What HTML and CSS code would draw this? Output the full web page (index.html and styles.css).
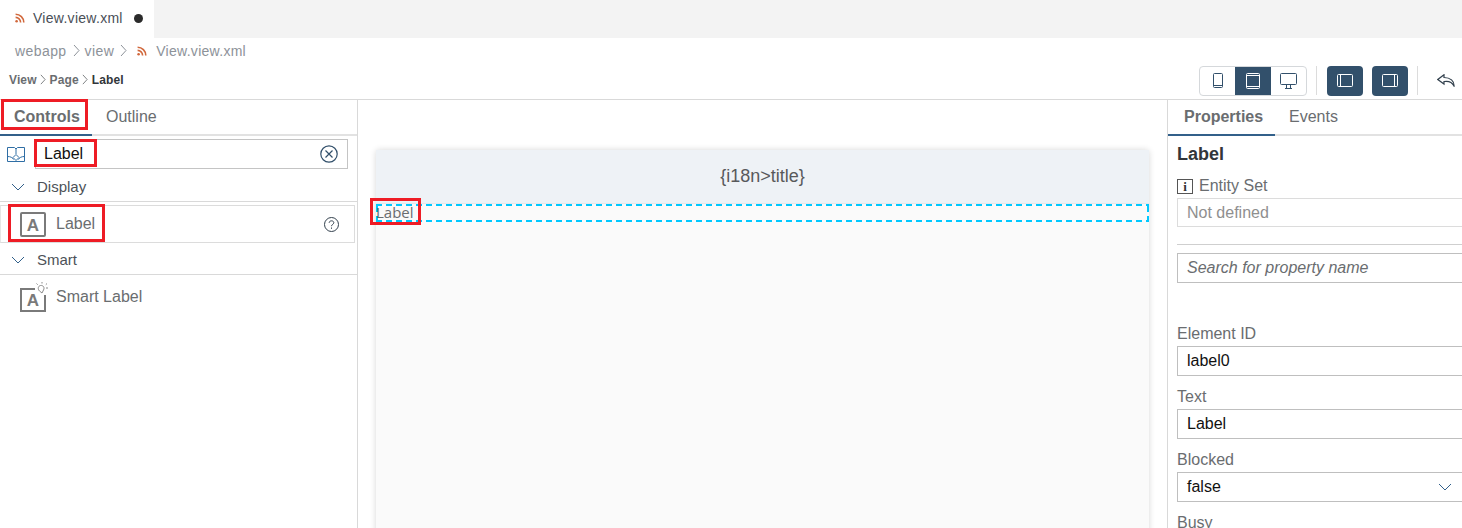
FILE: index.html
```html
<!DOCTYPE html>
<html lang="en">
<head>
<meta charset="utf-8">
<title>View.view.xml</title>
<link rel="stylesheet" href="styles.css">
</head>
<body>
<svg class="sprite" width="0" height="0" aria-hidden="true">
  <symbol id="rss" viewBox="0 0 10 10">
    <circle cx="1.600" cy="8.200" r="1.300" fill="#d1683c"/>
    <path d="M.6 4.400a5 5 0 0 1 5 5M.6 1.200a8.200 8.200 0 0 1 8.200 8.200" fill="none" stroke="#d1683c" stroke-width="1.600"/>
  </symbol>
  <symbol id="chev" viewBox="0 0 14 8">
    <path d="M1 1l6 6 6-6" fill="none" stroke="currentColor" stroke-width="1"/>
  </symbol>
  <symbol id="gt" viewBox="0 0 7 13">
    <path d="M1 1l5 5.500-5 5.500" fill="none" stroke="currentColor" stroke-width="1"/>
  </symbol>
</svg>

<header class="tabbar">
  <div class="file-tab">
    <svg class="rss"><use href="#rss"/></svg>
    <span class="file-name">View.view.xml</span>
    <span class="dirty"></span>
  </div>
</header>

<nav class="crumbs">
  <span>webapp</span><svg class="gt"><use href="#gt"/></svg><span>view</span><svg class="gt"><use href="#gt"/></svg>
  <svg class="rss crumb-rss"><use href="#rss"/></svg>
  <span class="crumb-file">View.view.xml</span>
</nav>

<div class="toolbar">
  <div class="path"><span>View</span><svg class="gt-small"><use href="#gt"/></svg><span>Page</span><svg class="gt-small"><use href="#gt"/></svg><span class="path-last">Label</span></div>
  <div class="tools">
    <div class="segment">
      <button class="seg">
        <svg width="10" height="15" viewBox="0 0 10 15" fill="none" stroke="#32506b"><rect x=".5" y=".5" width="9" height="14" rx="1"/><path d="M1 12.500h8"/></svg>
      </button>
      <button class="seg seg-on">
        <svg width="14" height="16" viewBox="0 0 14 16" fill="none" stroke="#fff"><rect x=".5" y=".5" width="13" height="15" rx="1"/><path d="M1 2.500h12M1 13.500h12"/></svg>
      </button>
      <button class="seg">
        <svg width="17" height="16" viewBox="0 0 17 16" fill="none" stroke="#32506b"><rect x=".5" y=".5" width="16" height="11" rx="1"/><path d="M6.500 12v3M10.500 12v3M5 15.500h7"/></svg>
      </button>
    </div>
    <span class="divider"></span>
    <button class="square">
      <svg width="16" height="13" viewBox="0 0 16 13" fill="none" stroke="#fff"><rect x=".5" y=".5" width="15" height="12" rx="1"/><path d="M3.500 1v11"/></svg>
    </button>
    <button class="square">
      <svg width="16" height="13" viewBox="0 0 16 13" fill="none" stroke="#fff"><rect x=".5" y=".5" width="15" height="12" rx="1"/><path d="M12.500 1v11"/></svg>
    </button>
    <span class="divider"></span>
    <svg class="undo" width="18" height="13" viewBox="0 0 18 13" fill="none" stroke="#32404d" stroke-width="1.200"><path d="M7 .8L.8 5.500 7 10V7.500c4.500-.8 8 .5 10 4.500.3-5-3.500-8.500-10-8.500z"/></svg>
  </div>
</div>

<main class="workspace">
  <aside class="left">
    <div class="tabs">
      <div class="tab tab-on left-on">Controls<i class="mark mark-tab"></i></div>
      <div class="tab">Outline</div>
    </div>
    <div class="search-row">
      <svg class="book" width="18" height="15" viewBox="0 0 18 15" fill="none" stroke="#2f6ea5"><path d="M.5 .5h7l1.500 1.500 1.500-1.500h7v14h-17zM9 2v5"/><path d="M.5 9.500c3 0 5 1 6 3M17.500 9.500c-3 0-5 1-6 3M9 7.500l-3 3 3 3 3-3z"/></svg>
      <div class="search">
        <span>Label</span>
        <svg width="18" height="18" viewBox="0 0 18 18" fill="none" stroke="#32506b" stroke-width="1.200"><circle cx="9" cy="9" r="8.200"/><path d="M5.500 5.500l7 7M12.500 5.500l-7 7"/></svg>
        <i class="mark mark-search"></i>
      </div>
    </div>
    <div class="group">
      <svg class="chev"><use href="#chev"/></svg><span>Display</span>
    </div>
    <div class="item item-boxed">
      <svg class="ctl" width="26" height="25" viewBox="0 0 26 25"><rect x="1" y="1" width="24" height="23" rx="1" fill="none" stroke="#7a7a7a" stroke-width="2"/><text x="13" y="19" class="ctl-a">A</text></svg>
      <span class="item-name">Label</span>
      <svg class="help" width="15" height="15" viewBox="0 0 15 15" fill="none" stroke="#32404d"><circle cx="7.500" cy="7.500" r="7"/><path d="M5.200 5.800C5.200 3.200 9.800 3.200 9.800 5.700c0 1.700-2.300 1.700-2.300 3.500M7.500 10.500v1.300"/></svg>
      <i class="mark mark-item"></i>
    </div>
    <div class="group">
      <svg class="chev"><use href="#chev"/></svg><span>Smart</span>
    </div>
    <div class="item">
      <svg class="ctl" width="28" height="30" viewBox="0 0 28 30"><path d="M15 7H1v22h24V13" fill="none" stroke="#7a7a7a" stroke-width="2"/><text x="13" y="24" class="ctl-a">A</text><path d="M19.500 9c-2-2-1.500-5 1-5.500s4.500 2 3 4.500l-1.500 3z" fill="none" stroke="#8a8a8a"/><path d="M22 0v1.500M27 1.500l-1.200 1.200M28 6h-2M16.500 1.500l1.200 1.200" stroke="#8a8a8a"/></svg>
      <span class="item-name">Smart Label</span>
    </div>
  </aside>

  <section class="canvas">
    <div class="device">
      <div class="page-title">{i18n&gt;title}</div>
      <div class="selected">
        <span class="label-text">Label</span>
        <i class="mark mark-canvas"></i>
      </div>
    </div>
  </section>

  <aside class="right">
    <div class="tabs">
      <div class="tab tab-on right-on">Properties</div>
      <div class="tab">Events</div>
    </div>
    <div class="props">
      <h2 class="prop-head">Label</h2>
      <div class="entity">
        <span class="info">i</span><span>Entity Set</span>
      </div>
      <div class="field field-muted">Not defined</div>
      <hr class="rule">
      <div class="field field-search">Search for property name</div>
      <div class="prop prop-first">
        <div class="prop-label">Element ID</div>
        <div class="field">label0</div>
      </div>
      <div class="prop">
        <div class="prop-label">Text</div>
        <div class="field">Label</div>
      </div>
      <div class="prop">
        <div class="prop-label">Blocked</div>
        <div class="field field-select"><span>false</span><svg class="chev"><use href="#chev"/></svg></div>
      </div>
      <div class="prop">
        <div class="prop-label">Busy</div>
      </div>
    </div>
  </aside>
</main>
</body>
</html>
```
FILE: styles.css
```css
* { box-sizing: border-box; }
html, body { height: 100%; }
body {
  margin: 0;
  height: 528px;
  overflow: hidden;
  display: flex;
  flex-direction: column;
  background: #fff;
  font-family: "Liberation Sans", Arial, sans-serif;
  font-size: 16px;
  color: #6a6d70;
}
.sprite { position: absolute; }
button { padding: 0; border: 0; background: none; display: flex; align-items: center; justify-content: center; }

.tabbar { height: 38px; background: #f3f3f3; display: flex; flex: none; }
.file-tab { width: 154px; background: #fff; display: flex; align-items: center; padding: 0 0 2px 15px; }
.rss { width: 10px; height: 10px; flex: none; }
.file-name { margin-left: 8px; font-size: 14px; color: #4a4f57; letter-spacing: .02em; }
.dirty { width: 9px; height: 9px; margin-left: 11px; border-radius: 50%; background: #2b2b2b; }

.crumbs { height: 26px; flex: none; display: flex; align-items: center; padding: 0 0 1px 15px; font-size: 14px; color: #8d9299; letter-spacing: .03em; }
.gt { width: 7px; height: 13px; margin: 0 5px 0 6px; color: #8d9299; flex: none; }
.crumb-rss { margin: 0 9px 0 5px; }
.crumb-file { letter-spacing: .02em; }

.toolbar { height: 36px; flex: none; display: flex; justify-content: space-between; padding: 0 0 3px 9px; border-bottom: 1px solid #d9d9d9; }
.path { font-size: 12px; font-weight: bold; color: #6a6d70; display: flex; align-items: center; padding-bottom: 1px; height: 32px; letter-spacing: .01em; }
.gt-small { width: 6px; height: 11px; margin: 0 4px 0 3px; color: #6a6d70; flex: none; }
.path-last { color: #32363a; }
.tools { display: flex; align-items: center; width: 263px; padding-top: 1px; }
.segment { display: flex; width: 108px; height: 30px; border: 1px solid #d5d8db; border-radius: 4px; overflow: hidden; }
.seg { width: 35px; flex: 1; }
.seg-on { background: #32506b; }
.divider { width: 1px; height: 29px; background: #dcdcdc; margin: 0 10px 0 9px; }
.square { width: 36px; height: 30px; background: #32506b; border-radius: 4px; }
.square + .square { margin-left: 9px; }
.undo { margin-left: 9px; }

.workspace { flex: 1; display: flex; min-height: 0; }
.left { width: 358px; flex: none; border-right: 1px solid #d9d9d9; }
.right { width: 295px; flex: none; border-left: 1px solid #d9d9d9; }
.tabs { height: 36px; display: flex; border-bottom: 2px solid #e2e2e2; }
.tab { position: relative; height: 36px; padding: 8px 14px 0; font-size: 16px; color: #6a6d70; }
.tab-on { font-weight: bold; border-bottom: 2px solid #32608a; }
.left-on { width: 92px; }
.right-on { width: 107px; padding-left: 16px; }

.search-row { display: flex; align-items: center; height: 34px; padding: 3px 9px 1px 7px; }
.book { flex: none; }
.search { position: relative; margin-left: 10px; flex: 1; height: 30px; border: 1px solid #c4c4c4; display: flex; align-items: center; justify-content: space-between; padding: 0 9px 0 8px; color: #111; font-size: 16px; }
.group { height: 32px; display: flex; align-items: center; padding: 2px 0 0 11px; font-size: 15px; border-bottom: 1px solid #d9d9d9; color: #4d5258; }
.group span { margin-left: 12px; }
.chev { width: 14px; height: 8px; color: #32608a; flex: none; }
.item { position: relative; height: 44px; display: flex; align-items: center; padding: 0 0 1px 20px; color: #6a6d70; }
.item-boxed { height: 38px; width: 355px; margin-top: 3px; border: 1px solid #dcdcdc; border-left-color: #e6e6e6; padding: 0 0 0 19px; }
.item-name { margin-left: 8px; font-size: 16px; }
.item-boxed .item-name { margin-left: 10px; }
.item .ctl { flex: none; }
.ctl-a { font: bold 17px "Liberation Sans", Arial, sans-serif; fill: #7a7a7a; text-anchor: middle; }
.help { margin-left: auto; margin-right: 15px; }

.mark { position: absolute; border: 3px solid #ee1c25; pointer-events: none; }
.mark-tab { left: 1px; top: -1px; width: 87px; height: 31px; }
.mark-search { left: -2px; top: -1px; width: 63px; height: 28px; }
.mark-item { left: 7px; top: -2px; width: 97px; height: 38px; }
.mark-canvas { left: -6px; top: -6px; width: 51px; height: 27px; }

.canvas { flex: 1; min-width: 0; padding: 50px 18px 0; background: #fff; overflow: hidden; }
.device { height: 400px; background: #fafafa; box-shadow: 0 0 6px rgba(0, 0, 0, .16); border-radius: 3px 3px 0 0; }
.page-title { height: 54px; background: #eef2f6; border-bottom: 1px solid #e4e8ec; display: flex; align-items: center; justify-content: center; font: 18px "Liberation Sans", sans-serif; color: #58595b; }
.selected {
  position: relative;
  height: 18px;
  display: flex;
  align-items: center;
  padding-bottom: 2px;
  background:
    repeating-linear-gradient(90deg, #00c8ff 0 6px, transparent 6px 10px) top / 100% 2px no-repeat,
    repeating-linear-gradient(90deg, #00c8ff 0 6px, transparent 6px 10px) bottom / 100% 2px no-repeat,
    repeating-linear-gradient(0deg, #00c8ff 0 6px, transparent 6px 10px) left / 2px 100% no-repeat,
    repeating-linear-gradient(0deg, #00c8ff 0 6px, transparent 6px 10px) right / 2px 100% no-repeat;
}
.label-text { font: 15px "Open Sans", sans-serif; color: #6a6d70; }

.props { padding: 7px 0 0 9px; }
.prop-head { margin: 0; font-size: 18px; line-height: 22px; font-weight: bold; color: #32363a; }
.entity { display: flex; align-items: center; margin-top: 10px; height: 22px; font-size: 16px; }
.info { width: 16px; height: 15px; margin-right: 6px; border: 1px solid #555; font: bold 13px/14px "Liberation Serif", serif; color: #333; text-align: center; }
.field { height: 30px; border: 1px solid #bfbfbf; border-right: 0; padding-left: 9px; display: flex; align-items: center; font-size: 16px; color: #111; }
.field-muted { height: 29px; border-color: #dcdcdc; color: #8f8f8f; margin-top: 1px; }
.rule { margin: 17px 0 8px; border: 0; border-top: 1px solid #cfcfcf; }
.field-search { font-style: italic; color: #6a6d70; }
.prop { margin-top: 9px; }
.prop-first { margin-top: 39px; }
.prop-label { height: 24px; line-height: 24px; font-size: 16px; }
.field-select { justify-content: space-between; padding-right: 10px; }
```
